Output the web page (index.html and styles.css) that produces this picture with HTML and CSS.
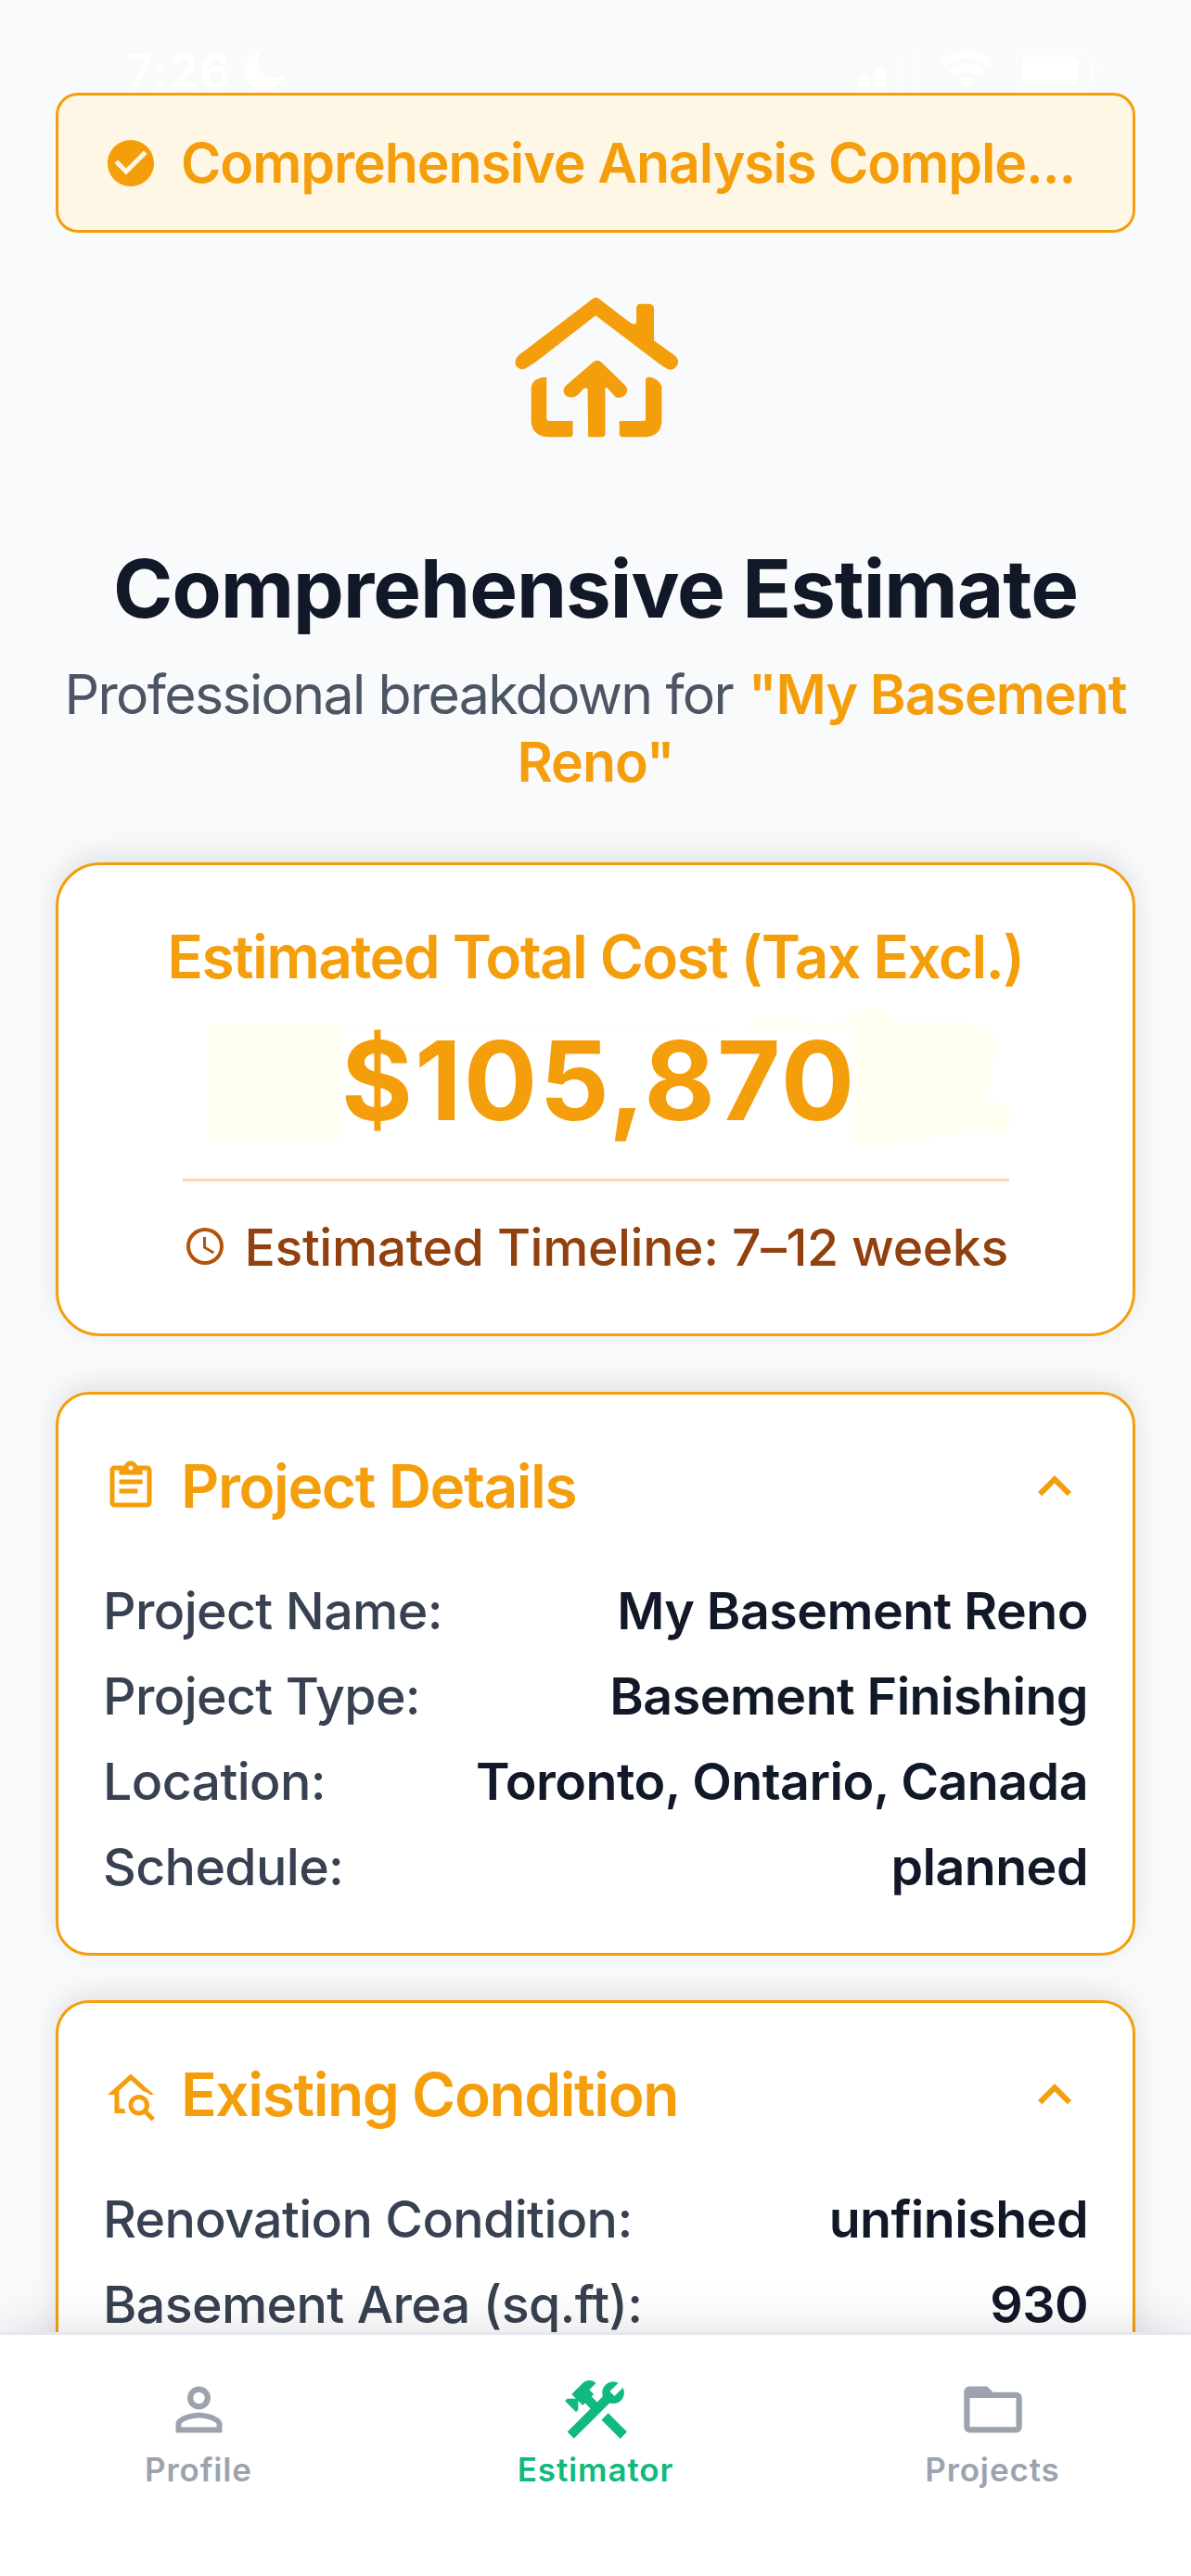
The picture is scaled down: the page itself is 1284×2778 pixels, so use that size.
FILE: index.html
```html
<!DOCTYPE html>
<html lang="en">
  <head>
    <meta charset="UTF-8" />
    <meta name="viewport" content="width=device-width, initial-scale=1.0" />
    <title>Comprehensive Estimate</title>
    <link rel="stylesheet" href="styles.css">
  </head>
  <body>
    <div class="app">
      <main class="screen">
        <div class="status-bar">
          <div class="status-left">
            <span class="status-time">7:26</span>
            <svg class="moon" viewBox="0 0 43 42">
              <path d="M16 0C6 4 0 12 0 21C0 33 9 42 22 42C32 42 40 36 43 27.500C41 26.800 38 28 33 28C22 28 15.500 21 15.500 11C15.500 6 17 2 16 0Z" />
            </svg>
          </div>
          <svg class="status-icons" viewBox="0 0 262 44">
            <rect x="0" y="26" width="11" height="16" rx="3" />
            <rect x="18" y="19" width="11" height="23" rx="3" />
            <rect class="faint" x="37" y="10" width="11" height="32" rx="3" />
            <rect class="faint" x="55" y="1" width="11" height="41" rx="3" />
            <g class="wifi">
              <path d="M91 15A37 37 0 0 1 142 15" />
              <path d="M101 24.500A23 23 0 0 1 132 24.500" />
            </g>
            <path d="M108 33Q116.500 25 125 33L116.500 42Z" />
            <rect class="battery" x="169.500" y="1.500" width="82" height="41" rx="13" />
            <rect x="175" y="7" width="61.500" height="29" rx="8" />
            <path class="faint" d="M256 15Q261 18 261 21.500T256 28Z" />
          </svg>
        </div>

        <div class="banner">
          <svg class="icon" viewBox="0 0 24 24">
            <path d="M12 2C6.500 2 2 6.500 2 12S6.500 22 12 22 22 17.500 22 12 17.500 2 12 2M10 17L5 12L6.410 10.590L10 14.170L17.590 6.580L19 8L10 17Z" />
          </svg>
          <span class="banner-text">Comprehensive Analysis Comple...</span>
        </div>

        <svg class="logo" viewBox="105 90 530 457">
          <path d="M356 97Q366 88 377 97L472 170Q484 180 495 178L498 172V126Q499 113 512 113H541Q554 115 555 128V232L624 282Q637 294 632 309Q622 331 600 325Q590 320 570 306L366 151L190 288Q165 308 138 323Q120 330 108 314Q101 297 113 283Q122 274 140 262Z" />
          <path d="M207 351V484Q207 493 216 493H292V534Q292 545 281 545H210Q158 541 157 490V385Q161 352 207 351Z" />
          <path d="M528 360Q528 350 540 350Q570 356 580 380V497Q576 540 532 545H452Q443 543 443 534V493H520Q528 493 528 485Z" />
          <path d="M357 303Q371 291 385 303L462 378Q473 390 465 404Q453 421 431 416L403 385H397V536Q396 545 386 545H342L340 388Q331 384 325 390Q308 411 297 415Q274 420 264 404Q258 389 270 378Z" />
        </svg>

        <h1 class="title">Comprehensive Estimate</h1>
        <p class="subtitle">
          <span class="subtitle-lead">Professional breakdown for</span>
          <strong class="project">"My Basement Reno"</strong>
        </p>

        <section class="card cost-card">
          <div class="cost-label">Estimated Total Cost (Tax Excl.)</div>
          <div class="cost-price">
            <svg class="highlight" viewBox="221 1087 870 147">
              <path d="M221 1104H777V1106.500H365V1231H221Z" />
              <path d="M804 1106.500Q808 1099 814 1098Q835 1095 854 1097.500Q865 1102 875.500 1102H902Q920 1087 940 1087Q959 1089 961.500 1101Q990 1100 1031 1100.700Q1075 1103 1073 1132Q1072 1145 1064 1154Q1068 1165 1061 1186Q1075 1184 1083 1192Q1099 1209 1077 1223Q1060 1217 1038 1221Q1005 1225 970 1233H862L919 1232V1106.500Z" />
            </svg>
            <span class="price">$105,870</span>
          </div>
          <div class="timeline">
            <svg class="clock" viewBox="0 0 24 24">
              <path d="M12 20A8 8 0 0 0 20 12A8 8 0 0 0 12 4A8 8 0 0 0 4 12A8 8 0 0 0 12 20M12 2A10 10 0 0 1 22 12A10 10 0 0 1 12 22A10 10 0 0 1 2 12A10 10 0 0 1 12 2M12.500 7V12.250L17 14.920L16.250 16.150L11 13V7H12.500Z" />
            </svg>
            <span>Estimated Timeline: 7–12 weeks</span>
          </div>
        </section>

        <section class="card">
          <div class="card-header">
            <svg class="icon" viewBox="0 0 24 24">
              <path d="M19 3H14.820C14.400 1.840 13.300 1 12 1S9.600 1.840 9.180 3H5C3.900 3 3 3.900 3 5V19C3 20.100 3.900 21 5 21H19C20.100 21 21 20.100 21 19V5C21 3.900 20.100 3 19 3M12 3C12.550 3 13 3.450 13 4S12.550 5 12 5 11 4.550 11 4 11.450 3 12 3M7 7H17V5H19V19H5V5H7V7M17 11H7V9H17V11M15 15H7V13H15V15Z" />
            </svg>
            <h2 class="card-title">Project Details</h2>
            <svg class="chevron" viewBox="0 0 24 24">
              <path d="M7.410 15.410L12 10.830L16.590 15.410L18 14L12 8L6 14Z" />
            </svg>
          </div>
          <dl class="rows">
            <div class="row"><dt>Project Name:</dt><dd>My Basement Reno</dd></div>
            <div class="row"><dt>Project Type:</dt><dd>Basement Finishing</dd></div>
            <div class="row"><dt>Location:</dt><dd>Toronto, Ontario, Canada</dd></div>
            <div class="row"><dt>Schedule:</dt><dd>planned</dd></div>
          </dl>
        </section>

        <section class="card">
          <div class="card-header">
            <svg class="icon" viewBox="0 0 24 24">
              <path d="M19.310 18.900L22.390 22L21 23.390L17.880 20.320C17.190 20.750 16.370 21 15.500 21C13 21 11 19 11 16.500S13 12 15.500 12S20 14 20 16.500C20 17.380 19.750 18.210 19.310 18.900M15.500 19C16.880 19 18 17.880 18 16.500S16.880 14 15.500 14S13 15.120 13 16.500S14.120 19 15.500 19M5 20V12H2L12 3L22 12H20.300C19.600 11.300 18.700 10.750 17.500 10.600L12 5.690L7 10.190V18H9.200C9.300 18.700 9.500 19.400 9.800 20H5Z" />
            </svg>
            <h2 class="card-title">Existing Condition</h2>
            <svg class="chevron" viewBox="0 0 24 24">
              <path d="M7.410 15.410L12 10.830L16.590 15.410L18 14L12 8L6 14Z" />
            </svg>
          </div>
          <dl class="rows">
            <div class="row"><dt>Renovation Condition:</dt><dd>unfinished</dd></div>
            <div class="row"><dt>Basement Area (sq.ft):</dt><dd>930</dd></div>
          </dl>
        </section>
      </main>

      <nav class="tab-bar">
        <a class="tab">
          <svg class="tab-icon" viewBox="0 0 24 24">
            <path d="M12 4A4 4 0 0 1 16 8A4 4 0 0 1 12 12A4 4 0 0 1 8 8A4 4 0 0 1 12 4M12 6A2 2 0 0 0 10 8A2 2 0 0 0 12 10A2 2 0 0 0 14 8A2 2 0 0 0 12 6M12 13C14.670 13 20 14.330 20 17V20H4V17C4 14.330 9.330 13 12 13M12 14.900C9.030 14.900 5.900 16.360 5.900 17V18.100H18.100V17C18.100 16.360 14.970 14.900 12 14.900Z" />
          </svg>
          <span>Profile</span>
        </a>
        <a class="tab active">
          <svg class="tab-icon" viewBox="0 0 24 24">
            <path d="M13.780 15.300L19.780 21.300L21.890 19.140L15.890 13.140L13.780 15.300M17.500 10.100C17.110 10.100 16.690 10.050 16.360 9.910L4.970 21.250L2.860 19.140L10.270 11.740L8.500 9.960L7.780 10.660L6.330 9.250V12.110L5.630 12.810L2.110 9.250L2.810 8.550H5.620L4.220 7.140L7.780 3.580C8.950 2.410 10.830 2.410 12 3.580L9.890 5.740L11.300 7.140L10.590 7.850L12.380 9.630L14.200 7.750C14.060 7.420 14 7 14 6.630C14 4.660 15.560 3.110 17.500 3.110C18.090 3.110 18.610 3.250 19.080 3.530L16.410 6.200L17.910 7.700L20.580 5.030C20.860 5.500 21 6 21 6.630C21 8.550 19.450 10.100 17.500 10.100Z" />
          </svg>
          <span>Estimator</span>
        </a>
        <a class="tab">
          <svg class="tab-icon" viewBox="0 0 24 24">
            <path d="M20 18H4V8H20M20 6H12L10 4H4C2.890 4 2 4.890 2 6V18A2 2 0 0 0 4 20H20A2 2 0 0 0 22 18V8C22 6.890 21.100 6 20 6Z" />
          </svg>
          <span>Projects</span>
        </a>
      </nav>
    </div>
  </body>
</html>
```
FILE: styles.css
```css
* {
  box-sizing: border-box;
  margin: 0;
  padding: 0;
}
body {
  background: #f9fafc;
  font-family: "Inter", sans-serif;
}
svg {
  display: block;
  flex-shrink: 0;
  fill: currentColor;
}
.app {
  display: flex;
  flex-direction: column;
  height: 2778px;
  overflow: hidden;
}
.screen {
  flex: 1;
  min-height: 0;
  padding: 0 60px;
  overflow: hidden;
}

/* Status bar */
.status-bar {
  display: flex;
  justify-content: space-between;
  align-items: flex-start;
  height: 100px;
  padding: 54px 36px 0 75px;
  color: #fff;
}
.status-left {
  display: flex;
  gap: 14px;
}
.status-time {
  font-size: 52px;
  font-weight: 600;
  line-height: 48px;
  letter-spacing: 0.9px;
}
.moon {
  width: 43px;
  height: 42px;
  margin-top: 2px;
}
.status-icons {
  width: 262px;
  height: 44px;
}
.faint {
  opacity: 0.25;
}
.wifi {
  fill: none;
  stroke: #fff;
  stroke-width: 9;
}
.battery {
  fill: none;
  stroke: #fff;
  stroke-width: 3;
  opacity: 0.35;
}

/* Banner */
.banner {
  display: flex;
  align-items: center;
  gap: 24px;
  height: 151px;
  padding: 0 48px;
  border: 3px solid #f59e0b;
  border-radius: 24px;
  background: #fff7e6;
  color: #f59e0b;
}
.icon {
  width: 60px;
  height: 60px;
}
.banner-text {
  font-size: 59px;
  font-weight: 600;
  letter-spacing: -1.1px;
  line-height: 72px;
  white-space: nowrap;
}

/* Heading */
.logo {
  width: 177px;
  height: 152px;
  margin: 69px 0 0 495px;
  color: #f59e0b;
}
.title {
  margin-top: 109px;
  color: #111827;
  font-size: 87px;
  font-weight: 700;
  letter-spacing: -1.02px;
  line-height: 108px;
  text-align: center;
  white-space: nowrap;
}
.subtitle {
  margin-top: 23px;
  color: #4b5563;
  font-size: 59px;
  line-height: 73px;
  text-align: center;
}
.subtitle-lead {
  letter-spacing: -1.67px;
}
.project {
  color: #f59e0b;
  font-weight: 600;
  letter-spacing: -1.05px;
}

/* Cards */
.card {
  margin-top: 48px;
  padding: 60px 48px 59px;
  border: 3px solid #f59e0b;
  border-radius: 36px;
  background: #fff;
  box-shadow: 0 -8px 30px rgba(0, 0, 0, 0.1);
}
.card-header {
  display: flex;
  align-items: center;
  height: 78px;
  color: #f59e0b;
}
.card-title {
  margin-left: 24px;
  font-size: 64px;
  font-weight: 600;
  letter-spacing: -1.4px;
  line-height: 78px;
}
.chevron {
  width: 72px;
  height: 72px;
  margin-left: auto;
}
.rows {
  display: flex;
  flex-direction: column;
  gap: 24px;
  margin-top: 61px;
}
.row {
  display: flex;
  justify-content: space-between;
  font-size: 55.5px;
  line-height: 68px;
  white-space: nowrap;
}
.row dt {
  color: #374151;
  font-weight: 500;
  letter-spacing: -0.63px;
}
.row dd {
  color: #111827;
  font-weight: 600;
  letter-spacing: -0.54px;
}

/* Cost card */
.cost-card {
  display: flex;
  flex-direction: column;
  align-items: center;
  height: 511px;
  margin-top: 72px;
  padding: 60px 0;
  border-radius: 48px;
}
.cost-card + .card {
  margin-top: 60px;
}
.cost-label {
  color: #f59e0b;
  font-size: 64px;
  font-weight: 600;
  letter-spacing: -1.62px;
  line-height: 78px;
}
.cost-price {
  position: relative;
  width: 891px;
  margin: 22px 0 34px;
  color: #f59e0b;
  font-size: 118px;
  font-weight: 700;
  letter-spacing: 2px;
  line-height: 144px;
  text-align: center;
}
/* soft marker behind the amount */
.highlight {
  position: absolute;
  top: -5px;
  left: 26px;
  width: 870px;
  height: 147px;
  color: #fffff2;
}
.price {
  position: relative;
  margin-left: 7px;
}
.timeline {
  display: flex;
  gap: 19px;
  width: 891px;
  padding-top: 38px;
  border-top: 3px solid #fed7aa;
  color: #92400e;
  font-size: 55.3px;
  font-weight: 500;
  letter-spacing: -0.37px;
  line-height: 66px;
  white-space: nowrap;
}
.clock {
  width: 48px;
  height: 48px;
  margin-top: 8px;
  color: #b45309;
}

/* Bottom tabs */
.tab-bar {
  position: relative;
  display: flex;
  flex-shrink: 0;
  height: 263px;
  border-top: 3px solid #e5e7eb;
  background: #fff;
  box-shadow: 0 -9px 45px rgba(0, 0, 0, 0.1);
}
.tab {
  display: flex;
  flex: 1;
  flex-direction: column;
  align-items: center;
  padding-top: 43px;
  color: #9ca3af;
  font-size: 35px;
  font-weight: 600;
  letter-spacing: 0.85px;
  line-height: 42px;
}
.tab-icon {
  width: 75px;
  height: 75px;
  margin-bottom: 6px;
}
.active {
  padding-top: 40px;
  color: #10b981;
}
.active .tab-icon {
  width: 81px;
  height: 81px;
  margin-bottom: 3px;
}
```
